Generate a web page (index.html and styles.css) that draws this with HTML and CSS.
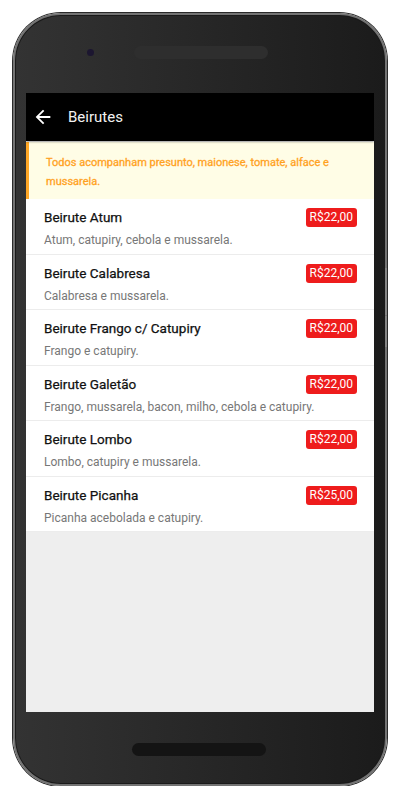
FILE: index.html
```html
<!DOCTYPE html>
<html lang="pt-BR">
<head>
<meta charset="utf-8">
<title>Beirutes</title>
<link rel="stylesheet" href="styles.css">
</head>
<body>
<div class="phone">
  <div class="side-btn side-btn-a"></div>
  <div class="side-btn side-btn-b"></div>
  <div class="bezel-top">
    <span class="camera"></span>
    <span class="speaker"></span>
  </div>
  <div class="screen">
    <header class="appbar">
      <svg class="back" viewBox="0 0 24 24" width="22" height="22"><path fill="#fff" d="M20 11H7.83l5.59-5.59L12 4l-8 8 8 8 1.41-1.41L7.83 13H20v-2z"/></svg>
      <span class="appbar-title">Beirutes</span>
    </header>
    <div class="notice">Todos acompanham presunto, maionese, tomate, alface e mussarela.</div>
    <ul class="list">
      <li class="item">
        <span class="item-title">Beirute Atum</span>
        <span class="price">R$22,00</span>
        <span class="item-desc">Atum, catupiry, cebola e mussarela.</span>
      </li>
      <li class="item">
        <span class="item-title">Beirute Calabresa</span>
        <span class="price">R$22,00</span>
        <span class="item-desc">Calabresa e mussarela.</span>
      </li>
      <li class="item">
        <span class="item-title">Beirute Frango c/ Catupiry</span>
        <span class="price">R$22,00</span>
        <span class="item-desc">Frango e catupiry.</span>
      </li>
      <li class="item">
        <span class="item-title">Beirute Galetão</span>
        <span class="price">R$22,00</span>
        <span class="item-desc">Frango, mussarela, bacon, milho, cebola e catupiry.</span>
      </li>
      <li class="item">
        <span class="item-title">Beirute Lombo</span>
        <span class="price">R$22,00</span>
        <span class="item-desc">Lombo, catupiry e mussarela.</span>
      </li>
      <li class="item">
        <span class="item-title">Beirute Picanha</span>
        <span class="price">R$25,00</span>
        <span class="item-desc">Picanha acebolada e catupiry.</span>
      </li>
    </ul>
  </div>
  <div class="bezel-bottom">
    <span class="speaker speaker-bottom"></span>
  </div>
</div>
</body>
</html>
```

FILE: styles.css
```css
* { box-sizing: border-box; }
html, body { margin: 0; padding: 0; background: #fff; }
body {
  font-family: Roboto, "Noto Sans", sans-serif;
  padding: 13px 0 0 13px;
}
.phone {
  position: relative;
  width: 374px;
  height: 773px;
  border: 2px solid #737373;
  border-radius: 48px;
  background: linear-gradient(90deg, #333333 0%, #272727 50%, #1b1b1b 100%);
  box-shadow: 0 0 0 1px #2a2a2a, inset 0 0 0 1px #1a1a1a;
  display: flex;
  flex-direction: column;
  align-items: center;
}
.side-btn {
  position: absolute;
  right: -2px;
  width: 2px;
  background: #858585;
}
.side-btn-a { top: 253px; height: 47px; }
.side-btn-b { top: 301px; height: 31px; }
.bezel-top {
  height: 78px;
  width: 100%;
  display: flex;
  align-items: center;
  padding: 0 0 4px 72px;
}
.camera {
  width: 7px;
  height: 7px;
  border-radius: 50%;
  background: #1c1630;
  margin-right: 40px;
}
.speaker {
  display: block;
  width: 134px;
  height: 13px;
  border-radius: 7px;
  background: #2e2e2e;
}
.screen {
  width: 348px;
  height: 619px;
  background: #eeeeee;
  overflow: hidden;
}
.appbar {
  height: 48px;
  background: #000;
  display: flex;
  align-items: center;
  padding-left: 6px;
  box-shadow: 0 1px 2px rgba(0,0,0,0.35);
  position: relative;
}
.back { display: block; margin-right: 14px; }
.appbar-title {
  color: #f2f2f2;
  font-size: 15px;
}
.notice {
  height: 57px;
  margin-top: 1px;
  background: #fffde6;
  border-left: 3px solid #ffa726;
  color: #ffa21f;
  font-size: 11px;
  font-weight: 400;
  -webkit-text-stroke: 0.3px #ffa21f;
  line-height: 19px;
  padding: 11px 20px 0 17px;
}
.list {
  list-style: none;
  margin: 0;
  padding: 0;
}
.item {
  height: 55.5px;
  background: #fff;
  border-bottom: 1px solid #ececec;
  display: grid;
  grid-template-columns: 1fr auto;
  align-items: start;
  padding: 9px 17px 0 18px;
}
.item-title {
  font-size: 13.5px;
  font-weight: 400;
  -webkit-text-stroke: 0.25px #111;
  color: #111;
  line-height: 19.5px;
}
.item-desc {
  grid-column: 1 / -1;
  font-size: 12px;
  color: #777;
  line-height: 19px;
  white-space: nowrap;
}
.price {
  background: #ee1c1c;
  color: #fff;
  font-size: 12px;
  line-height: 19px;
  height: 19px;
  padding: 0 4px;
  border-radius: 3px;
}
.bezel-bottom {
  flex: 1;
  width: 100%;
  display: flex;
  justify-content: center;
  padding-top: 31px;
}
.speaker-bottom {
  background: #141414;
  margin-left: -2px;
}
```
